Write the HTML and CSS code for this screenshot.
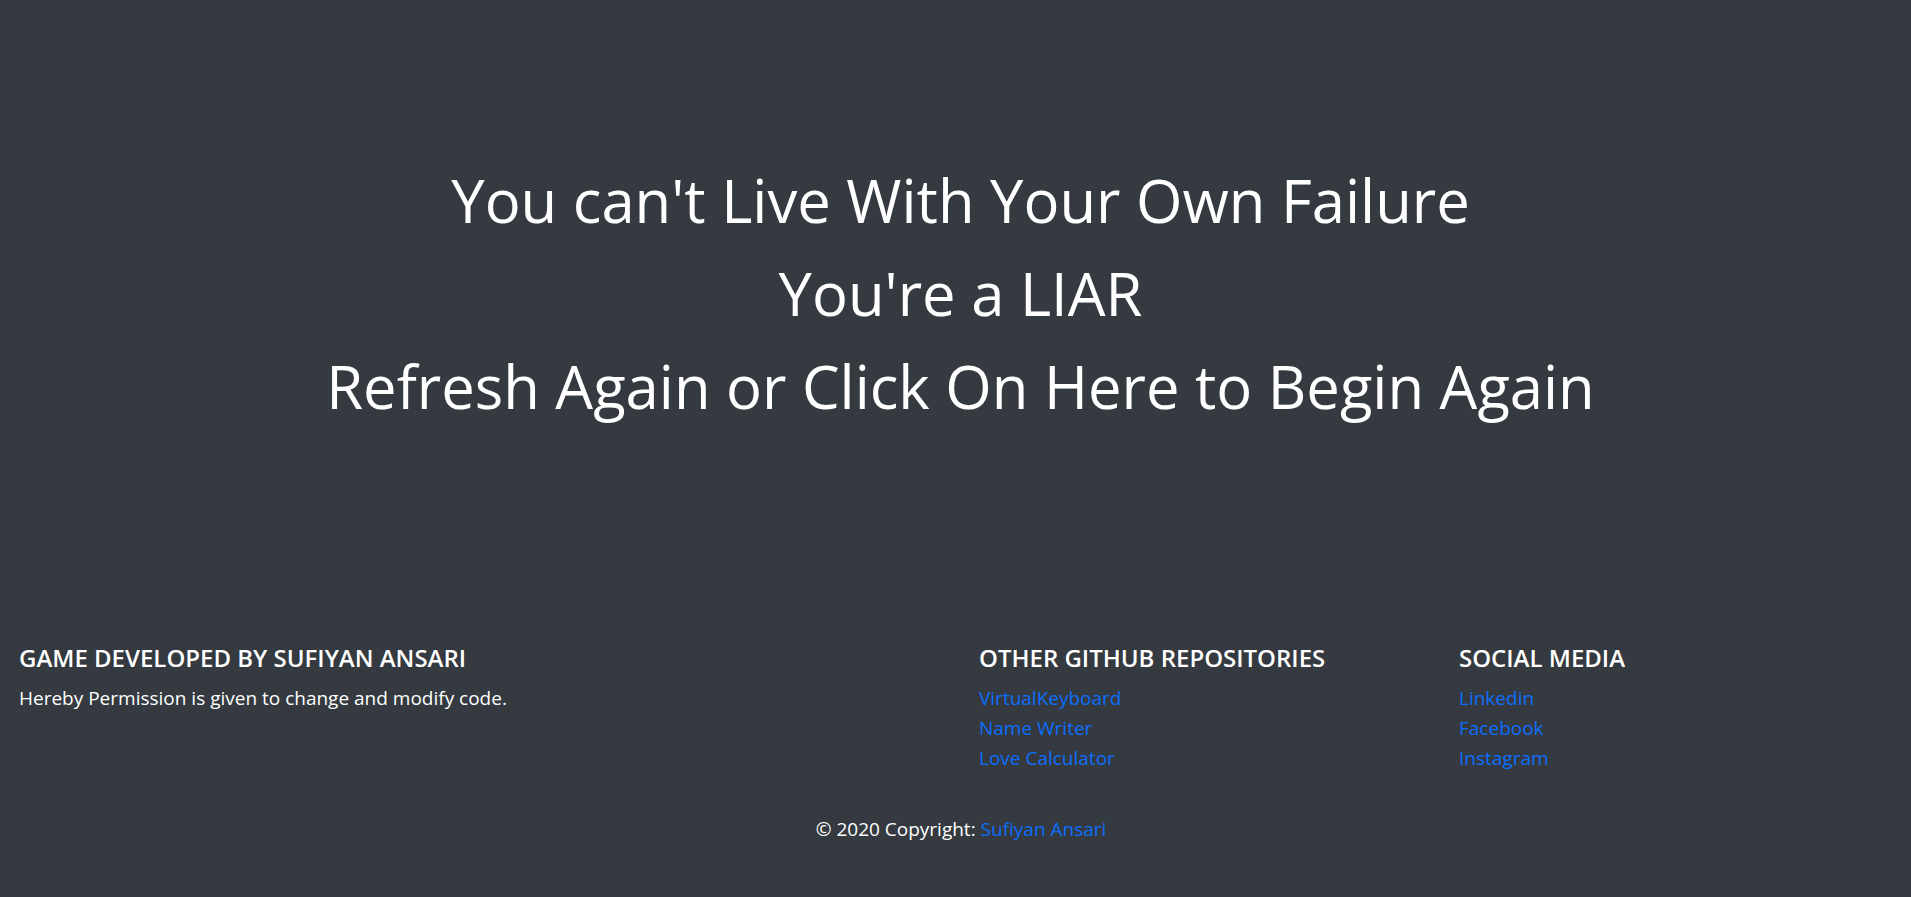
FILE: index.html
```html
<!DOCTYPE html>
<html lang="en">
<head>
<meta charset="utf-8">
<title>Game Over</title>
<link rel="stylesheet" href="styles.css">
</head>
<body>
<main class="message">
  <h1 class="message-line">You can't Live With Your Own Failure</h1>
  <h1 class="message-line">You're a LIAR</h1>
  <h1 class="message-line">Refresh Again or Click On Here to Begin Again</h1>
</main>
<footer class="footer">
  <div class="footer-cols">
    <div class="footer-col">
      <h5 class="footer-title">GAME DEVELOPED BY SUFIYAN ANSARI</h5>
      <p class="footer-text">Hereby Permission is given to change and modify code.</p>
    </div>
    <div class="footer-col">
      <h5 class="footer-title">OTHER GITHUB REPOSITORIES</h5>
      <ul class="footer-links">
        <li><a href="#">VirtualKeyboard</a></li>
        <li><a href="#">Name Writer</a></li>
        <li><a href="#">Love Calculator</a></li>
      </ul>
    </div>
    <div class="footer-col">
      <h5 class="footer-title">SOCIAL MEDIA</h5>
      <ul class="footer-links">
        <li><a href="#">Linkedin</a></li>
        <li><a href="#">Facebook</a></li>
        <li><a href="#">Instagram</a></li>
      </ul>
    </div>
  </div>
  <div class="copyright">© 2020 Copyright: <a href="#">Sufiyan Ansari</a></div>
</footer>
</body>
</html>
```
FILE: styles.css
```css
html, body {
  margin: 0;
  padding: 0;
}
body {
  background: #343a40;
  color: #ffffff;
  font-family: "Open Sans", "Noto Sans", sans-serif;
  min-height: 897px;
}
a {
  color: #0d6efd;
  text-decoration: none;
}
.message {
  padding: 154px 0 212px 10px;
  text-align: center;
}
.message-line {
  margin: 0;
  font-size: 59.75px;
  font-weight: 400;
  line-height: 93px;
}
.footer {
  padding: 0 0 0 19px;
}
.footer-cols {
  display: grid;
  grid-template-columns: 960px 480px 1fr;
}
.footer-title {
  margin: 0 0 12px;
  font-size: 24px;
  font-weight: 600;
  line-height: 26px;
}
.footer-text {
  margin: 0;
  font-size: 19px;
  line-height: 30px;
}
.footer-links {
  list-style: none;
  margin: 0;
  padding: 0;
  font-size: 19px;
  line-height: 30px;
}
.copyright {
  margin-top: 41px;
  padding-right: 8px;
  text-align: center;
  font-size: 19px;
  line-height: 30px;
}
```
